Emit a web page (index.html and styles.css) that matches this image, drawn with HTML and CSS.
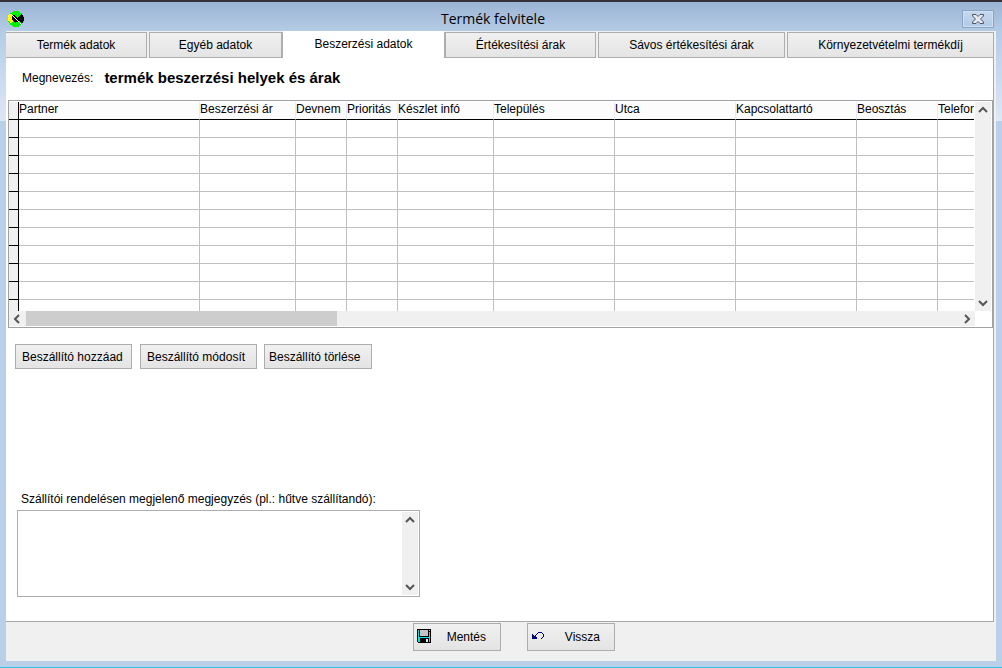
FILE: index.html
```html
<!DOCTYPE html>
<html lang="hu">
<head>
<meta charset="utf-8">
<title>Termék felvitele</title>
<link rel="stylesheet" href="styles.css">
</head>
<body>
<div class="window">
  <header class="titlebar">
    <svg class="app-icon" width="16" height="16" viewBox="0 0 16 16" shape-rendering="crispEdges" aria-hidden="true">
      <circle cx="8" cy="8" r="8" fill="#00f000"/>
      <path d="M0 5L2 2.500L7 8L3 13L1 11L0 9Z" fill="#ff0"/>
      <path d="M4 5L6 4L9 7L13 3L15 4L16 8L15 12L13 12L11 10L7 12L4 9Z" fill="#000"/>
      <path d="M3 3L14 14" stroke="#fff"/>
    </svg>
    <h1 class="title">Termék felvitele</h1>
    <button class="close" type="button" aria-label="Bezárás">
      <svg width="12" height="10" viewBox="0 0 12 10" aria-hidden="true">
        <path d="M.5.5H4L6 2.500L8 .5H11.500V2L8.500 5L11.500 8V9.500H8L6 7.500L4 9.500H.5V8L3.500 5L.5 2Z" fill="#e6eaf0" stroke="#4c5468"/>
      </svg>
    </button>
  </header>
  <nav class="tabs">
    <button class="tab tab-product" type="button">Termék adatok</button>
    <button class="tab tab-other" type="button">Egyéb adatok</button>
    <button class="tab tab-active" type="button" aria-current="page">Beszerzési adatok</button>
    <button class="tab tab-prices" type="button">Értékesítési árak</button>
    <button class="tab tab-bands" type="button">Sávos értékesítési árak</button>
    <button class="tab tab-env" type="button">Környezetvételmi termékdíj</button>
  </nav>
  <main class="page">
    <div class="heading"><span>Megnevezés:</span><h2 class="name">termék beszerzési helyek és árak</h2></div>
    <div class="grid">
      <div class="grid-view">
        <table class="table">
          <colgroup><col class="w-mark"><col class="w-partner"><col class="w-price"><col class="w-small"><col class="w-small"><col class="w-stock"><col class="w-wide"><col class="w-wide"><col class="w-wide"><col class="w-post"><col class="w-wide"></colgroup>
          <thead><tr><th></th><th>Partner</th><th>Beszerzési ár</th><th>Devnem</th><th>Prioritás</th><th>Készlet infó</th><th>Település</th><th>Utca</th><th>Kapcsolattartó</th><th>Beosztás</th><th>Telefon</th></tr></thead>
          <tbody>
            <tr><td></td><td></td><td></td><td></td><td></td><td></td><td></td><td></td><td></td><td></td><td></td></tr>
            <tr><td></td><td></td><td></td><td></td><td></td><td></td><td></td><td></td><td></td><td></td><td></td></tr>
            <tr><td></td><td></td><td></td><td></td><td></td><td></td><td></td><td></td><td></td><td></td><td></td></tr>
            <tr><td></td><td></td><td></td><td></td><td></td><td></td><td></td><td></td><td></td><td></td><td></td></tr>
            <tr><td></td><td></td><td></td><td></td><td></td><td></td><td></td><td></td><td></td><td></td><td></td></tr>
            <tr><td></td><td></td><td></td><td></td><td></td><td></td><td></td><td></td><td></td><td></td><td></td></tr>
            <tr><td></td><td></td><td></td><td></td><td></td><td></td><td></td><td></td><td></td><td></td><td></td></tr>
            <tr><td></td><td></td><td></td><td></td><td></td><td></td><td></td><td></td><td></td><td></td><td></td></tr>
            <tr><td></td><td></td><td></td><td></td><td></td><td></td><td></td><td></td><td></td><td></td><td></td></tr>
            <tr><td></td><td></td><td></td><td></td><td></td><td></td><td></td><td></td><td></td><td></td><td></td></tr>
            <tr><td></td><td></td><td></td><td></td><td></td><td></td><td></td><td></td><td></td><td></td><td></td></tr>
          </tbody>
        </table>
      </div>
      <div class="vbar">
        <svg class="arrow" viewBox="0 0 10 10"><path d="M1 7L5 3L9 7"/></svg>
        <svg class="arrow" viewBox="0 0 10 10"><path d="M1 3L5 7L9 3"/></svg>
      </div>
      <div class="hbar">
        <svg class="arrow" viewBox="0 0 10 10"><path d="M7 1L3 5L7 9"/></svg>
        <div class="track"><div class="thumb"></div></div>
        <svg class="arrow" viewBox="0 0 10 10"><path d="M3 1L7 5L3 9"/></svg>
      </div>
    </div>
    <div class="actions">
      <button class="button" type="button">Beszállító hozzáad</button>
      <button class="button" type="button">Beszállító módosít</button>
      <button class="button button-delete" type="button">Beszállító törlése</button>
    </div>
    <div class="note">
      <label class="note-label" for="note">Szállítói rendelésen megjelenő megjegyzés (pl.: hűtve szállítandó):</label>
      <div class="note-box">
        <textarea class="note-text" id="note"></textarea>
        <div class="vbar">
          <svg class="arrow" viewBox="0 0 10 10"><path d="M1 7L5 3L9 7"/></svg>
          <svg class="arrow" viewBox="0 0 10 10"><path d="M1 3L5 7L9 3"/></svg>
        </div>
      </div>
    </div>
  </main>
  <footer class="footer">
    <button class="button command" type="button">
      <svg class="command-icon" width="14" height="14" viewBox="0 0 14 14" shape-rendering="crispEdges" aria-hidden="true">
        <path d="M0 0H14V14H1V13H0Z" fill="#000"/>
        <path d="M1 1H2V8H12V3H13V13H12V9H3V13H1Z" fill="#00e5e5"/>
        <path d="M3 1H11V7H3ZM12 1H13V2H12Z" fill="#c6c3c6"/>
        <path d="M9 10H11V13H9Z" fill="#e8e8e8"/>
      </svg>
      <span class="command-text">Mentés</span>
    </button>
    <button class="button command" type="button">
      <svg class="command-icon" width="14" height="14" viewBox="0 0 14 14" shape-rendering="crispEdges" aria-hidden="true">
        <path d="M1 5H2V6H3V7H4V6H5V5H6V4H7V3H11V4H12V5H13V8H12V9H11V10H10V9H11V8H12V5H11V4H7V5H6V6H5V8H6V10H1Z" fill="#000084"/>
      </svg>
      <span class="command-text">Vissza</span>
    </button>
  </footer>
</div>
</body>
</html>
```
FILE: styles.css
```css
* { box-sizing: border-box; }
body {
  margin: 0;
  font: 12px/16px "Liberation Sans", Arial, sans-serif;
  color: #000;
}
button { font: inherit; color: inherit; }
.window {
  display: flex;
  flex-direction: column;
  min-height: 100vh;
  padding: 0 6px 6px;
  border-top: 2px solid #35323c;
  border-bottom: 1px solid #35c3dc;
  background: #bad0e9 linear-gradient(#9ab4d3, #b5cce6 30px, #dde8f5 119px) no-repeat 0 0 / 100% 119px;
}
.titlebar {
  display: grid;
  grid-template-columns: 18px 1fr 34px;
  align-items: center;
  height: 29px;
}
.app-icon { margin: 4px 0 0 2px; }
.title {
  margin: 5px 0 0;
  font: 14px/20px "Open Sans", sans-serif;
  text-align: center;
}
.close {
  display: grid;
  place-items: center;
  width: 32px;
  height: 18px;
  margin-top: 5px;
  padding: 0;
  border: 1px solid #8ba4c5;
  border-radius: 1px;
  background: linear-gradient(#c5d9ef, #b2cae6);
  box-shadow: inset 0 0 0 1px #cfdff2;
}
.tabs {
  display: grid;
  grid-template-columns: 141fr 133fr 160fr 150fr 187fr 207fr;
  column-gap: 2px;
  height: 27px;
  padding: 1px 2px 0 0;
  background: #f0f0f0;
}
.tab {
  padding: 0;
  border: 1px solid #adadad;
  background: linear-gradient(#f0f0f0, #e4e4e4);
  white-space: nowrap;
}
.tab-product { border-left: 0; }
.tab-other { border-right-width: 2px; margin-right: -1px; }
.tab-active {
  margin: -1px 0 0 -1px;
  padding-bottom: 2px;
  border: 0;
  background: #fff;
}
.tab-prices { border-left-width: 2px; margin-left: -2px; }
.page {
  flex: 1;
  margin-right: 2px;
  padding-left: 2px;
  border: solid #a7a7ab;
  border-width: 0 1px 1px 0;
  background: #fff;
  box-shadow: 2px 0 #f0f0f0;
}
.heading {
  display: flex;
  align-items: center;
  gap: 11px;
  padding: 11px 14px 13px;
}
.name { margin: 0; font-size: 15px; line-height: 18px; }
.grid {
  display: grid;
  grid-template-columns: minmax(0, 1fr) 16px;
  grid-template-rows: auto 15px;
  padding: 1px 1px 1px 0;
  border: 1px solid #a0a0a5;
}
.grid-view { height: 209px; margin-right: 1px; overflow: hidden; }
.table {
  width: 1050px;
  table-layout: fixed;
  border-collapse: separate;
  border-spacing: 0;
}
.w-mark { width: 10px; }
.w-partner { width: 181px; }
.w-price { width: 96px; }
.w-small { width: 51px; }
.w-stock { width: 96px; }
.w-wide { width: 121px; }
.w-post { width: 81px; }
.table th {
  height: 18px;
  padding: 0 0 2px;
  border-right: 1px solid #e3edf9;
  border-bottom: 1px solid #000;
  background: #fcfcfc;
  font-weight: normal;
  line-height: 15px;
  text-align: left;
  white-space: nowrap;
}
.table td {
  height: 18px;
  padding: 0;
  border: solid #c0c0c0;
  border-width: 0 1px 1px 0;
}
.table th:first-child, .table td:first-child {
  border-color: #000;
  background: #f0f0f0;
}
.vbar {
  display: flex;
  flex-direction: column;
  align-items: center;
  justify-content: space-between;
  padding: 3px 0;
  background: #f0f0f0;
}
.hbar {
  display: flex;
  align-items: center;
  padding: 0 3px;
  background: #f0f0f0;
}
.arrow { width: 10px; height: 10px; fill: none; stroke: #555; stroke-width: 2; }
.track { flex: 1; height: 15px; padding: 0 4px; }
.thumb { width: 33.4%; height: 15px; background: #cdcdcd; }
.actions { display: flex; gap: 8px; padding: 16px 7px 0; }
.button {
  height: 25px;
  padding: 0 6px;
  border: 1px solid #adadad;
  background: linear-gradient(#f0f0f0, #e4e4e4);
  text-align: left;
  white-space: nowrap;
}
.actions .button { width: 117px; }
.actions .button-delete { width: 108px; padding: 0 4px; margin-left: -1px; }
.note { width: 412px; padding: 122px 0 0 9px; }
.note-label { display: block; padding-left: 4px; white-space: nowrap; }
.note-box {
  display: flex;
  height: 87px;
  margin-top: 3px;
  padding: 1px;
  border: 1px solid #abadb3;
}
.note-text {
  flex: 1;
  min-width: 0;
  padding: 2px;
  border: 0;
  outline: 0;
  resize: none;
  font: inherit;
}
.note-box .vbar { width: 16px; }
.footer {
  display: flex;
  justify-content: center;
  gap: 26px;
  height: 39px;
  padding: 1px 0 10px 26px;
  background: #f0f0f0;
}
.command {
  display: flex;
  align-items: center;
  width: 88px;
  height: 28px;
  padding: 0 14px 0 3px;
}
.command-icon { margin-bottom: 2px; }
.command-text { flex: 1; text-align: right; }
```
